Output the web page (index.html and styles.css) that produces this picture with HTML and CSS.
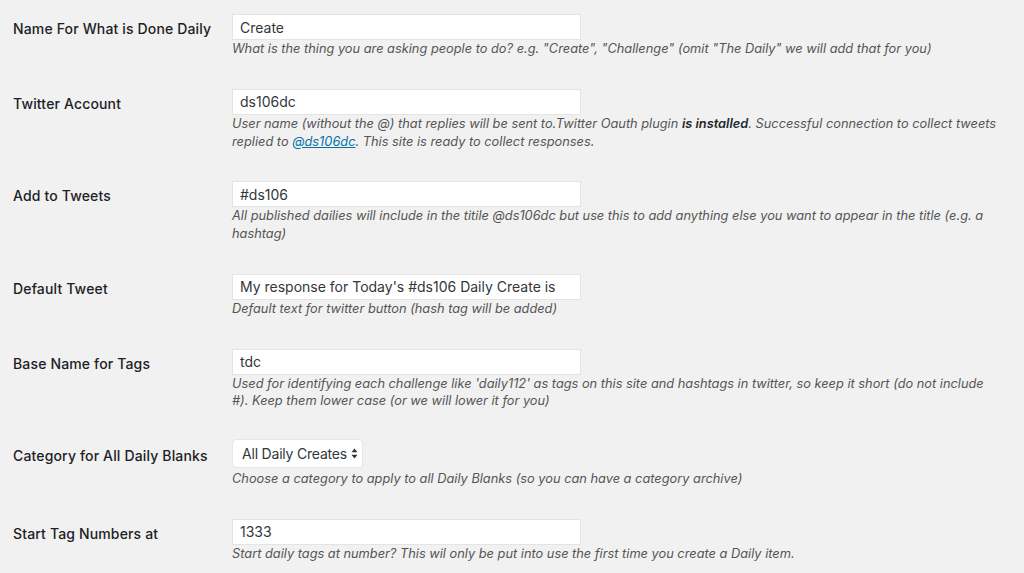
FILE: index.html
```html
<!DOCTYPE html>
<html lang="en">
<head>
<meta charset="utf-8">
<title>Daily Blank Settings</title>
<link rel="stylesheet" href="styles.css">
</head>
<body>
<form class="form-table">
  <div class="row">
    <label class="label" for="f1">Name For What is Done Daily</label>
    <div class="field">
      <input id="f1" class="text" type="text" value="Create">
      <p class="desc">What is the thing you are asking people to do? e.g. "Create", "Challenge" (omit "The Daily" we will add that for you)</p>
    </div>
  </div>
  <div class="row">
    <label class="label" for="f2">Twitter Account</label>
    <div class="field">
      <input id="f2" class="text" type="text" value="ds106dc">
      <p class="desc">User name (without the @) that replies will be sent to.Twitter Oauth plugin <strong>is installed</strong>. Successful connection to collect tweets replied to <a href="#">@ds106dc</a>. This site is ready to collect responses.</p>
    </div>
  </div>
  <div class="row">
    <label class="label" for="f3">Add to Tweets</label>
    <div class="field">
      <input id="f3" class="text" type="text" value="#ds106">
      <p class="desc">All published dailies will include in the titile @ds106dc but use this to add anything else you want to appear in the title (e.g. a hashtag)</p>
    </div>
  </div>
  <div class="row">
    <label class="label" for="f4">Default Tweet</label>
    <div class="field">
      <input id="f4" class="text" type="text" value="My response for Today's #ds106 Daily Create is">
      <p class="desc">Default text for twitter button (hash tag will be added)</p>
    </div>
  </div>
  <div class="row">
    <label class="label" for="f5">Base Name for Tags</label>
    <div class="field">
      <input id="f5" class="text" type="text" value="tdc">
      <p class="desc">Used for identifying each challenge like 'daily112' as tags on this site and hashtags in twitter, so keep it short (do not include #). Keep them lower case (or we will lower it for you)</p>
    </div>
  </div>
  <div class="row">
    <label class="label" for="f6">Category for All Daily Blanks</label>
    <div class="field">
      <div class="select-wrap">
        <select id="f6" class="select"><option>All Daily Creates</option></select>
        <svg class="select-arrows" width="7" height="11" viewBox="0 0 7 11" aria-hidden="true"><path d="M3.5 0.5 L6.5 4.2 H0.5 Z M3.5 10.5 L6.5 6.8 H0.5 Z" fill="#333"/></svg>
      </div>
      <p class="desc">Choose a category to apply to all Daily Blanks (so you can have a category archive)</p>
    </div>
  </div>
  <div class="row">
    <label class="label" for="f7">Start Tag Numbers at</label>
    <div class="field">
      <input id="f7" class="text" type="text" value="1333">
      <p class="desc">Start daily tags at number? This wil only be put into use the first time you create a Daily item.</p>
    </div>
  </div>
</form>
</body>
</html>
```

FILE: styles.css
```css
html, body {
  margin: 0;
  padding: 0;
  background: #f1f1f1;
}
body {
  font-family: Inter, "Liberation Sans", Arial, sans-serif;
  color: #23282d;
  overflow: hidden;
}
.form-table {
  display: flex;
  flex-direction: column;
  padding: 0 24px 0 13px;
}
.row {
  display: grid;
  grid-template-columns: 219px 1fr;
  padding: 16px 0 15px;
}
.row:first-child {
  padding-top: 14px;
}
.label {
  padding-top: 2px;
  font-size: 14px;
  font-weight: 500;
  letter-spacing: 0.15px;
  line-height: 26px;
  color: #1d2125;
}
.field {
  display: flex;
  flex-direction: column;
  align-items: flex-start;
}
.text {
  box-sizing: border-box;
  width: 349px;
  height: 26px;
  margin: 0;
  padding: 0 7px;
  border: 1px solid #e4e4e4;
  border-radius: 0;
  background: #fff;
  font-family: inherit;
  font-size: 14px;
  color: #32373c;
  outline: none;
}
.desc {
  margin: 0;
  font-size: 12.8px;
  line-height: 17.75px;
  font-style: italic;
  color: #555;
}
.desc strong {
  font-weight: 600;
  color: #23282d;
}
.desc a {
  color: #0073aa;
  text-decoration: underline;
}
.select-wrap {
  position: relative;
  margin: -2px 0 2px;
}
.select {
  appearance: none;
  -webkit-appearance: none;
  box-sizing: border-box;
  width: 131px;
  height: 29px;
  margin: 0;
  padding: 0 8px 0 9px;
  border: 1px solid #e6e6e6;
  border-radius: 4px;
  background: #fff;
  font-family: inherit;
  font-size: 14px;
  letter-spacing: -0.2px;
  color: #32373c;
  outline: none;
}
.select-arrows {
  position: absolute;
  right: 5px;
  top: 9px;
  pointer-events: none;
}
```
